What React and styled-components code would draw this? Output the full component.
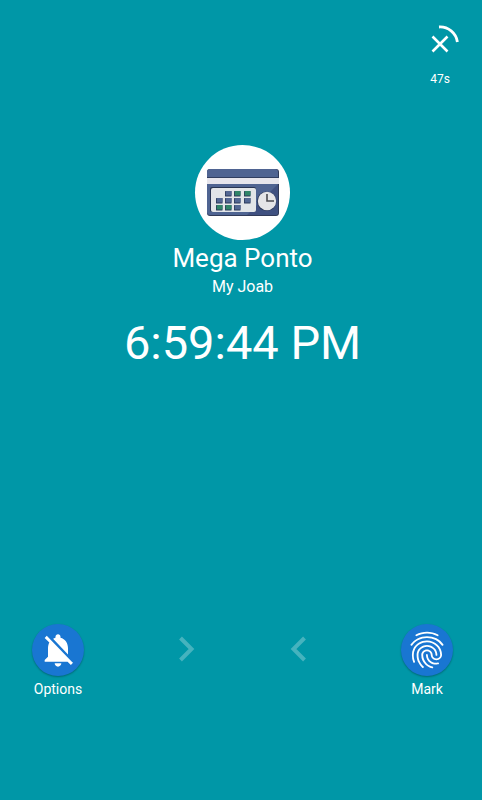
import React from 'react'
import styled, { createGlobalStyle } from 'styled-components'
import { MdFingerprint, MdNotificationsOff } from 'react-icons/md'

const GlobalStyle = createGlobalStyle`
    body {
        margin: 0;
        background: #0097a7;
        font-family: Roboto, 'Liberation Sans', sans-serif;
        color: white;
    }
    h1, p {
        margin: 0;
        font-weight: 400;
    }
`

function Timeout() {
    return (
        <Header>
            <CloseButton type='button' aria-label='Close'>
                <svg width='40' height='40' viewBox='0 0 40 40' fill='none' stroke='white'>
                    <path d='M19 3A17.5 17.5 0 0 1 37.4 18' strokeWidth='2.8' />
                    <path d='M12.5 12.5l15 15M27.5 12.5l-15 15' strokeWidth='2.6' />
                </svg>
                <span>47s</span>
            </CloseButton>
        </Header>
    )
}

const cells = [
    [18, 22, 'b'], [27, 22, 'g'], [37, 22, 'g'],
    [9, 29, 'b'], [18, 29, 'b'], [27, 29, 'b'], [37, 29, 'b'],
    [9, 36, 'g'], [18, 36, 'g'], [27, 36, 'b'],
]

function TimeClockLogo() {
    return (
        <svg width='72' height='48' viewBox='0 0 72 48'>
            <rect x='0' y='0' width='72' height='47' rx='3' fill='#303a58' />
            <rect x='0' y='0' width='71' height='46' rx='3' fill='#4f6492' />
            <path d='M71 15v28q0 3-3 3H40z' fill='#3f5080' />
            <rect x='0' y='8' width='72' height='1' fill='#303e60' />
            <rect x='0' y='9' width='72' height='6' fill='#e6e5ec' />
            <rect x='3' y='18' width='46' height='25' rx='2' fill='#283553' />
            <rect x='4' y='19' width='45' height='24' rx='2' fill='#e2e5e8' />
            {cells.map(([x, y, tone]) => (
                <g key={`${x}-${y}`} transform={`translate(${x} ${y})`}>
                    <rect width='6.5' height='5.5' rx='0.5' fill='#2b3a5a' />
                    <rect x='0.8' width='5.7' height='4.4' rx='0.5' fill={tone === 'g' ? '#2f8468' : '#526793'} />
                </g>
            ))}
            <circle cx='59.7' cy='32.2' r='9.8' fill='#2b3858' />
            <circle cx='60' cy='32' r='9.2' fill='#e5e5e8' />
            <path d='M60 25v7h7' fill='none' stroke='#4b4b52' strokeWidth='1.6' />
        </svg>
    )
}

function Chevron({ left }) {
    return (
        <ChevronIcon width='16' height='26' viewBox='0 0 16 26'>
            <path d={left ? 'M14.5 2l-11 11 11 11' : 'M1.5 2l11 11-11 11'} />
        </ChevronIcon>
    )
}

function App() {
    return (
        <Page>
            <GlobalStyle />
            <Timeout />
            <Main>
                <Avatar>
                    <TimeClockLogo />
                </Avatar>
                <Title>Mega Ponto</Title>
                <Subtitle>My Joab</Subtitle>
                <Clock>6:59:44 PM</Clock>
            </Main>
            <Actions>
                <Action type='button'>
                    <Circle>
                        <MdNotificationsOff size={40} />
                    </Circle>
                    Options
                </Action>
                <Chevron />
                <Chevron left />
                <Action type='button'>
                    <Circle>
                        <MdFingerprint size={44} />
                    </Circle>
                    Mark
                </Action>
            </Actions>
        </Page>
    )
}

export default App

const Page = styled.div`
    box-sizing: border-box;
    min-height: 100vh;
    padding: 24px 29px 102px 32px;
    display: flex;
    flex-direction: column;
`

const Header = styled.header`
    display: flex;
    justify-content: flex-end;
    margin-right: -7px;
`

const CloseButton = styled.button`
    display: flex;
    flex-direction: column;
    align-items: center;
    gap: 8px;
    padding: 0;
    border: none;
    background: none;
    color: white;
    font-family: inherit;
    font-size: 12px;
    line-height: 14px;
    cursor: pointer;

    svg {
        display: block;
    }
`

const Main = styled.main`
    flex: 1;
    display: flex;
    flex-direction: column;
    align-items: center;
    padding-top: 59px;
    text-align: center;
`

const Avatar = styled.div`
    width: 95px;
    height: 95px;
    border-radius: 50%;
    background: white;
    display: flex;
    justify-content: center;
    align-items: center;
`

const Title = styled.h1`
    font-size: 26px;
    line-height: 36px;
`

const Subtitle = styled.p`
    font-size: 16px;
    line-height: 22px;
`

const Clock = styled.p`
    margin-top: 15px;
    font-size: 47px;
    line-height: 60px;
`

const Actions = styled.div`
    display: flex;
    justify-content: space-between;
    align-items: flex-start;
`

const Action = styled.button`
    width: 52px;
    display: flex;
    flex-direction: column;
    align-items: center;
    gap: 4px;
    padding: 0;
    border: none;
    background: none;
    color: white;
    font-family: inherit;
    font-size: 14px;
    line-height: 18px;
    cursor: pointer;
`

const Circle = styled.span`
    width: 52px;
    height: 52px;
    border-radius: 50%;
    background: #1976d2;
    box-shadow: 0 1px 2px rgba(0, 0, 0, 0.3);
    display: flex;
    justify-content: center;
    align-items: center;
`

const ChevronIcon = styled.svg`
    margin-top: 12px;
    fill: none;
    stroke: rgba(255, 255, 255, 0.27);
    stroke-width: 4px;
`
